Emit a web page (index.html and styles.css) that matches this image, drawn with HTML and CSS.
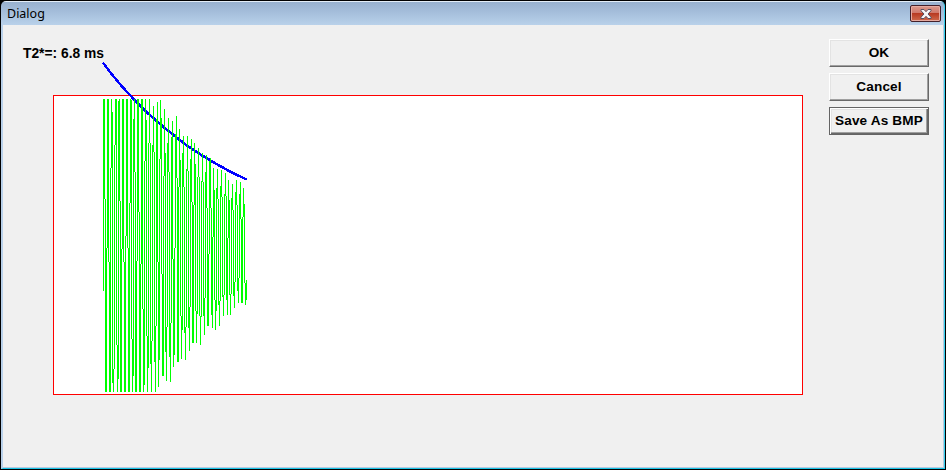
FILE: index.html
```html
<!DOCTYPE html>
<html lang="en">
<head>
<meta charset="utf-8">
<title>Dialog</title>
<link rel="stylesheet" href="styles.css">
</head>
<body>
<div class="window">
  <header class="titlebar">
    <span class="title">Dialog</span>
    <button class="close" aria-label="Close">
      <svg width="12" height="10" viewBox="0 0 12 10"><path d="M1 .5h3l2 2.2L8 .5h3v1.3L8 5l3 3.2v1.3H8L6 7.3 4 9.5H1V8.2L4 5 1 1.8z" fill="#f7f7f7" stroke="#5b5260" stroke-width="1"/></svg>
    </button>
  </header>
  <main class="client">
    <section class="chart">
      <div class="reading">T2*=: 6.8 ms</div>
      <svg class="plot" width="750" height="334" viewBox="53 61 750 334" shape-rendering="crispEdges">
        <rect x="53.5" y="95.5" width="749" height="299" fill="#fff" stroke="#f00"/>
        <polyline id="fit" fill="none" stroke="#00f" stroke-width="2.5" points="102.8,62.5 112,74.5 122,86.5 131.3,96.5 140,105.5 148,113.3 163,126.5 176.3,137.3 187,145.5 198,153 213,162 230,171.5 246.6,179.5"/>
        <path id="signal" fill="#0f0"/>
      </svg>
    </section>
    <nav class="actions">
      <button class="btn">OK</button>
      <button class="btn">Cancel</button>
      <button class="btn active">Save As BMP</button>
    </nav>
  </main>
</div>
<script src="plot.js"></script>
</body>
</html>
```
FILE: styles.css
```css
* { box-sizing: border-box; }
body { margin: 0; background: #000; }
.window {
  width: 946px; height: 470px;
  padding: 1px;
  background: #000;
  overflow: hidden;
  display: flex; flex-direction: column;
}
.titlebar {
  height: 24px;
  display: flex; justify-content: space-between; align-items: flex-start;
  padding: 4px 3px 0 6px;
  background: linear-gradient(#e3edf7 0, #e3edf7 1px, #98b1cf 1px, #a6bfdc 12px, #b9d1ea 100%);
  border-right: 1px solid #35d0ee;
  border-radius: 5px 5px 0 0;
}
.title { font: 12.5px/17px "Noto Sans", "Open Sans", sans-serif; color: #000; }
.close {
  width: 31px; height: 17px; padding: 0;
  display: flex; align-items: center; justify-content: center;
  border: 1px solid #43202a; border-radius: 2px;
  box-shadow: inset 0 0 0 1px #e6aaa0;
  background: linear-gradient(#dc9a8e 0, #cf7668 48%, #b83a22 50%, #cf6a4c 100%);
}
.client {
  flex: 1;
  display: flex; justify-content: space-between; align-items: flex-start;
  padding: 14px 15px 0 50px;
  background: #f0f0f0;
  border-left: 2px solid #b9d1ea;
  border-right: 1px solid #35d0ee;
  border-bottom: 1px solid #18c4e6;
  box-shadow: inset -1px -1px #b9c9dd;
}
.chart { width: 750px; padding-top: 6px; }
.reading {
  height: 16px; margin-left: -30px;
  font: bold 13.8px/17px "Liberation Sans", sans-serif;
  color: #000; white-space: nowrap;
}
.plot { display: block; }
.actions { display: flex; flex-direction: column; gap: 6px; }
.btn {
  width: 100px; height: 28px; padding: 0;
  font: bold 13.6px/20px "Liberation Sans", sans-serif;
  letter-spacing: .15px;
  color: #000; white-space: nowrap;
  background: #f0f0f0;
  border: 1px solid; border-color: #fff #696969 #696969 #fff;
  box-shadow: inset -1px -1px #a0a0a0, inset 1px 1px #e3e3e3;
}
.btn.active {
  border-color: #646464;
  box-shadow: inset 1px 1px #fff, inset -1px -1px #696969, inset -2px -2px #a0a0a0, inset 2px 2px #e3e3e3;
}
```
FILE: plot.js
```js
// Column centre and height of each oscillation crest and trough.
const crests = [
  [104.3,70],[108,70],[111.6,70],[115.7,70],[119.3,75],[123,75],[127,78],[130.7,80],[134.4,80],
  [138,82],[141.8,86],[145.6,90],[149.5,94],[153.5,106],[157.3,102],[160.6,100],[164.5,109],
  [168.4,118],[172.3,121],[176.5,116],[179.5,129],[183.3,136],[187.5,136],[191.4,139],[194.6,143],
  [198.5,148],[202.5,153],[206.4,155],[210.2,158],[213.5,168],[217.4,169],[221.4,170],[225.5,173],
  [228.5,180],[232.4,184],[236.4,180],[240.4,182],[243.5,188]
];
const troughs = [
  [106,425],[109.9,425],[113.4,425],[117.6,425],[121,422],[124.9,420],[129,418],[132.6,415],
  [136.1,412],[140.3,408],[143.7,404],[147.6,400],[151.4,396],[155.4,392],[158.6,387],[163,376],
  [166.4,381],[170.4,382],[173.6,367],[178,362],[181.6,359],[185.5,360],[189.4,351],[193,343],
  [196.5,343],[200.5,345],[204.4,335],[208,326],[212.4,328],[215.6,330],[219.5,326],[223.5,316],
  [227.4,315],[230.5,315],[234.4,308],[238.4,303],[242,303],[245.6,305]
];
const turns = [[102.9, 294]].concat(crests, troughs).sort((a, b) => a[0] - b[0]);
turns.push([246.9, 280]);

function level(x) {
  for (let i = 1; i < turns.length; i++) {
    const [x0, y0] = turns[i - 1], [x1, y1] = turns[i];
    if (x <= x1) {
      const t = Math.max(0, (x - x0) / (x1 - x0));
      return Math.min(392, Math.max(99, y0 + (y1 - y0) * (1 - Math.cos(Math.PI * t)) / 2));
    }
  }
  return turns[turns.length - 1][1];
}

let d = "";
for (let x = 103; x < 247; x++) {
  let lo = 999, hi = 0;
  for (let k = 0; k <= 20; k++) {
    const y = level(x + k / 20);
    lo = Math.min(lo, y);
    hi = Math.max(hi, y);
  }
  d += `M${x} ${Math.round(lo)}h1V${Math.round(hi)}h-1z`;
}
document.getElementById("signal").setAttribute("d", d);
```
